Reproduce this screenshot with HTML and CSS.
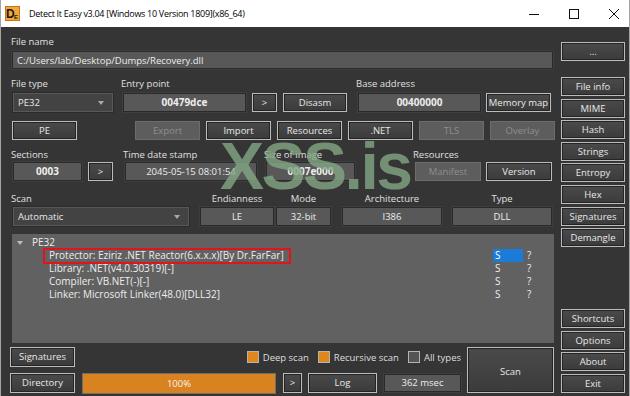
FILE: index.html
```html
<!DOCTYPE html>
<html lang="en">
<head>
<meta charset="UTF-8" />
<title>Detect It Easy</title>
<link rel="stylesheet" href="styles.css">
</head>
<body>
<div class="window">
  <div class="titlebar">
    <svg class="appicon" width="15" height="15" viewBox="0 0 15 15">
      <rect x="0.5" y="0.5" width="14" height="14" fill="#f2a73b" stroke="#c27614"/>
      <text x="1" y="12" font-family="Liberation Sans" font-weight="700" font-size="12" fill="#1a1a1a">D</text>
      <text x="9" y="12.5" font-family="Liberation Sans" font-weight="700" font-size="6" fill="#1a1a1a">E</text>
    </svg>
    <span class="title">Detect It Easy v3.04 [Windows 10 Version 1809](x86_64)</span>
    <div class="caps">
      <svg width="10" height="10" viewBox="0 0 10 10"><line x1="0" y1="5.5" x2="10" y2="5.5" stroke="#111"/></svg>
      <svg width="10" height="10" viewBox="0 0 10 10"><rect x="0.5" y="0.5" width="9" height="9" fill="none" stroke="#111"/></svg>
      <svg width="10" height="10" viewBox="0 0 10 10"><path d="M0 0L10 10M10 0L0 10" stroke="#111"/></svg>
    </div>
  </div>

  <div class="client">
    <div class="main">
      <div class="lbl first">File name</div>
      <div class="field path">C:/Users/lab/Desktop/Dumps/Recovery.dll</div>

      <div class="row r1">
        <div class="grp g-type">
          <div class="lbl">File type</div>
          <div class="ctl"><div class="combo w100">PE32<span class="arrow"></span></div></div>
        </div>
        <div class="grp g-entry">
          <div class="lbl">Entry point</div>
          <div class="ctl">
            <div class="field val w123">00479dce</div>
            <div class="btn w25">&gt;</div>
            <div class="btn w64">Disasm</div>
          </div>
        </div>
        <div class="grp g-base">
          <div class="lbl">Base address</div>
          <div class="ctl tight">
            <div class="field val w123">00400000</div>
            <div class="btn w65">Memory map</div>
          </div>
        </div>
      </div>

      <div class="row r2">
        <div class="btn w65 pe">PE</div>
        <div class="btn w65 off export">Export</div>
        <div class="btn w65">Import</div>
        <div class="btn w65">Resources</div>
        <div class="btn w65">.NET</div>
        <div class="btn w65 off">TLS</div>
        <div class="btn w65 off">Overlay</div>
      </div>

      <div class="row r3">
        <div class="grp g-sec">
          <div class="lbl">Sections</div>
          <div class="ctl">
            <div class="field val w69">0003</div>
            <div class="btn w25">&gt;</div>
          </div>
        </div>
        <div class="grp g-time">
          <div class="lbl">Time date stamp</div>
          <div class="ctl"><div class="field plain w132">2045-05-15 08:01:54</div></div>
        </div>
        <div class="grp g-size">
          <div class="lbl">Size of image</div>
          <div class="ctl"><div class="field val w89">0007e000</div></div>
        </div>
        <div class="grp g-res">
          <div class="lbl">Resources</div>
          <div class="ctl tight">
            <div class="btn w66 off">Manifest</div>
            <div class="btn w66">Version</div>
          </div>
        </div>
      </div>

      <div class="row r4">
        <div class="grp g-scan">
          <div class="lbl">Scan</div>
          <div class="ctl"><div class="combo w176">Automatic<span class="arrow"></span></div></div>
        </div>
        <div class="grp c g-end">
          <div class="lbl">Endianness</div>
          <div class="ctl"><div class="field plain w74">LE</div></div>
        </div>
        <div class="grp c g-mode">
          <div class="lbl">Mode</div>
          <div class="ctl"><div class="field plain w55">32-bit</div></div>
        </div>
        <div class="grp c g-arch">
          <div class="lbl">Architecture</div>
          <div class="ctl"><div class="field plain w100">I386</div></div>
        </div>
        <div class="grp c g-typ">
          <div class="lbl">Type</div>
          <div class="ctl"><div class="field plain w100">DLL</div></div>
        </div>
      </div>

      <div class="results">
        <div class="node"><span class="twisty"></span>PE32</div>
        <div class="item"><span class="name">Protector: Eziriz .NET Reactor(6.x.x.x)[By Dr.FarFar]</span><span class="s sel">S</span><span class="q">?</span></div>
        <div class="item"><span class="name">Library: .NET(v4.0.30319)[-]</span><span class="s">S</span><span class="q">?</span></div>
        <div class="item"><span class="name">Compiler: VB.NET(-)[-]</span><span class="s">S</span><span class="q">?</span></div>
        <div class="item"><span class="name">Linker: Microsoft Linker(48.0)[DLL32]</span><span class="s">S</span><span class="q">?</span></div>
        <div class="mark"></div>
      </div>

      <div class="bottom">
        <div class="brow">
          <div class="btn w65 tall">Signatures</div>
          <div class="checks">
            <span class="chk"></span><span class="chk-l">Deep scan</span>
            <span class="chk"></span><span class="chk-l">Recursive scan</span>
            <span class="chk empty"></span><span class="chk-l">All types</span>
          </div>
        </div>
        <div class="btn scan">Scan</div>
        <div class="brow">
          <div class="btn w65 tall">Directory</div>
          <div class="progress">100%</div>
          <div class="btn w19 tall gap7">&gt;</div>
          <div class="btn w69 tall gap6">Log</div>
          <div class="field plain msec">362 msec</div>
        </div>
      </div>
    </div>

    <div class="side">
      <div class="btn side-top">...</div>
      <div class="side-list">
        <div class="btn">File info</div>
        <div class="btn">MIME</div>
        <div class="btn">Hash</div>
        <div class="btn">Strings</div>
        <div class="btn">Entropy</div>
        <div class="btn">Hex</div>
        <div class="btn">Signatures</div>
        <div class="btn">Demangle</div>
      </div>
      <div class="side-list side-bottom">
        <div class="btn">Shortcuts</div>
        <div class="btn">Options</div>
        <div class="btn">About</div>
        <div class="btn">Exit</div>
      </div>
    </div>

    <div class="watermark">XSS.is</div>
  </div>
</div>
</body>
</html>
```

FILE: styles.css
```css
* { box-sizing: border-box; }
body {
  margin: 0;
  width: 630px;
  height: 396px;
  overflow: hidden;
  font-family: "Open Sans", "Noto Sans", sans-serif;
  font-size: 9.5px;
  background: #353535;
  color: #dedede;
}
.window {
  border-left: 1px solid #a4a4a4;
  border-right: 1px solid #a4a4a4;
  height: 396px;
}
.titlebar {
  height: 27px;
  background: #fff;
  color: #000;
  display: flex;
  align-items: center;
  padding-left: 4px;
}
.title { margin-left: 9px; font-size: 9px; letter-spacing: -0.3px; }
.caps {
  margin-left: auto;
  display: flex;
  gap: 30px;
  padding-right: 10px;
}
.client {
  position: relative;
  height: 369px;
  display: flex;
  padding: 0 4px 3px 9px;
}
.main { width: 545px; display: flex; flex-direction: column; }
.side { width: 64px; margin-left: 6px; display: flex; flex-direction: column; }

.lbl { height: 12px; line-height: 12px; white-space: nowrap; color: #e0e0e0; }
.lbl.first { margin-top: 9px; margin-left: 1px; }

.btn {
  height: 19px;
  border: 1px solid #bcbcbc;
  background: linear-gradient(#4a4a4a, #3b3b3b);
  box-shadow: inset 0 0 0 1px #242424;
  color: #e8e8e8;
  text-align: center;
  line-height: 17px;
  white-space: nowrap;
}
.btn.off {
  border-color: #6c6c6c;
  background: #5d5d5d;
  box-shadow: none;
  color: #8e8e8e;
}
.field {
  height: 19px;
  background: #585858;
  border: 1px solid #2a2a2a;
  box-shadow: 0 0 0 1px #3e3e3e;
  color: #ededed;
  line-height: 17px;
  white-space: nowrap;
  overflow: hidden;
}
.field.val { text-align: center; font-weight: 700; font-size: 10px; }
.field.plain { text-align: center; }
.path { margin-top: 3px; margin-left: 2px; width: 541px; height: 18px; padding-left: 4px; }

.combo {
  height: 19px;
  display: flex;
  align-items: center;
  justify-content: space-between;
  padding: 0 8px 0 4px;
  background: #434343;
  border: 1px solid #585858;
  box-shadow: 0 0 0 1px #2b2b2b;
  color: #e8e8e8;
}
.arrow {
  width: 0;
  height: 0;
  border-left: 3.5px solid transparent;
  border-right: 3.5px solid transparent;
  border-top: 4px solid #a9a9a9;
}

.row { display: flex; }
.grp { display: flex; flex-direction: column; }
.grp.c .lbl { text-align: center; padding-left: 2px; }
.ctl { display: flex; gap: 6px; padding-left: 2px; }
.ctl.tight { gap: 5px; }

.w19 { width: 19px; }
.w25 { width: 25px; }
.w55 { width: 55px; }
.w64 { width: 64px; }
.w65 { width: 65px; }
.w66 { width: 66px; }
.w69 { width: 69px; }
.w74 { width: 74px; }
.w89 { width: 89px; }
.w100 { width: 100px; }
.w123 { width: 123px; }
.w132 { width: 132px; }
.w176 { width: 176px; }

.r1 { margin-top: 9px; }
.r1 .ctl { margin-top: 3px; }
.g-type { margin-left: 1px; }
.g-entry { margin-left: 8px; }
.g-base { margin-left: 9px; }

.r2 { margin-top: 9px; gap: 6px; }
.r2 .pe { margin-left: 2px; }
.r2 .export { margin-left: 52px; }

.r3 { margin-top: 9px; }
.r3 .ctl { margin-top: 1px; }
.g-sec { margin-left: 1px; }
.g-time { margin-left: 10px; }
.g-size { margin-left: 7px; }
.g-res { margin-left: 58px; }

.r4 { margin-top: 12px; }
.r4 .ctl { margin-top: 2px; }
.g-scan { margin-left: 1px; }
.g-end { margin-left: 9px; }
.g-arch { margin-left: 9px; }
.g-typ { margin-left: 8px; }

.results {
  position: relative;
  margin-top: 8px;
  margin-left: 2px;
  width: 542px;
  height: 109px;
  padding-top: 2px;
  background: #616161;
  color: #ededed;
  font-size: 10px;
}
.node { height: 13px; line-height: 13px; display: flex; align-items: center; padding-left: 5px; }
.twisty {
  width: 0;
  height: 0;
  margin-right: 9px;
  border-left: 3px solid transparent;
  border-right: 3px solid transparent;
  border-top: 4px solid #bdbdbd;
}
.item {
  display: grid;
  grid-template-columns: 481px 30px 20px;
  height: 13px;
  line-height: 13px;
  white-space: nowrap;
}
.item .name { padding-left: 37px; }
.item .s { padding-left: 2px; }
.item .q { padding-left: 4px; }
.item .sel { background: #1a7bd8; color: #fff; }
.mark {
  position: absolute;
  left: 31px;
  top: 14px;
  width: 248px;
  height: 16px;
  border: 2px solid #e4121a;
}

.bottom {
  margin-top: 4px;
  display: grid;
  grid-template-columns: 457px 87px;
  grid-template-rows: 20px 20px;
  row-gap: 6px;
}
.brow { display: flex; align-items: center; }
.btn.tall { height: 20px; line-height: 18px; }
.scan { grid-column: 2; grid-row: 1 / 3; height: 46px; line-height: 48px; }
.checks {
  margin-left: auto;
  padding-right: 6px;
  display: flex;
  align-items: center;
}
.chk {
  width: 12px;
  height: 12px;
  border: 1px solid #b4b4b4;
  background: #df861c;
  margin-right: 4px;
}
.chk.empty { background: #545454; }
.chk-l { margin-right: 9px; }
.chk-l:last-child { margin-right: 0; }
.progress {
  margin-left: 7px;
  width: 194px;
  height: 21px;
  background: #d98220;
  border: 1px solid #6e6e6e;
  color: #f4f4f4;
  text-align: center;
  line-height: 19px;
}
.gap7 { margin-left: 7px; }
.gap6 { margin-left: 6px; }
.msec { margin-left: 7px; width: 77px; height: 18px; line-height: 16px; }

.side-top { margin-top: 15px; }
.side-list {
  margin-top: 16px;
  display: grid;
  grid-auto-rows: 19px;
  row-gap: 2.6px;
}
.side-bottom { margin-top: auto; }

.watermark {
  position: absolute;
  left: 219px;
  top: 106px;
  font-family: "Liberation Sans", Arial, sans-serif;
  font-weight: 700;
  font-size: 66px;
  line-height: 66px;
  letter-spacing: -2.5px;
  color: rgba(132, 168, 132, 0.8);
  pointer-events: none;
}
```
